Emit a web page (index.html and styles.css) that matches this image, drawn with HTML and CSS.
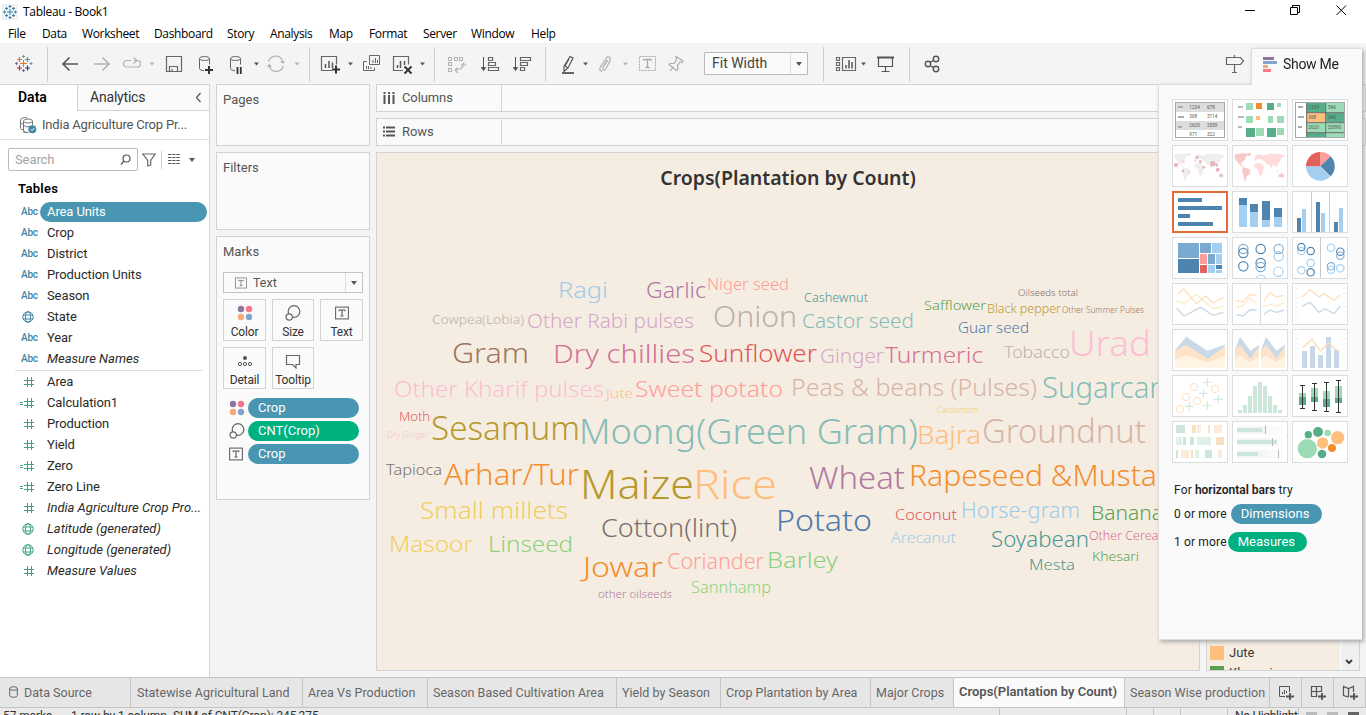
FILE: index.html
```html
<!DOCTYPE html>
<html lang="en">
<head>
<meta charset="utf-8">
<title>Tableau - Book1</title>
<link rel="stylesheet" href="styles.css">
</head>
<body>
<svg class="defs" width="0" height="0">
  <defs>
    <symbol id="globe" viewBox="0 0 12 12"><g fill="none" stroke="currentColor"><circle cx="6" cy="6" r="5.2"/><ellipse cx="6" cy="6" rx="2.5" ry="5.2"/><path d="M1 4h10M1 8h10"/></g></symbol>
    <symbol id="hash" viewBox="0 0 16 12"><path d="M5 4.500h10M5 8.500h10M8.500 1v10M12.500 1v10" fill="none" stroke="currentColor"/></symbol>
    <symbol id="calc" viewBox="0 0 16 12"><path d="M5 4.500h10M5 8.500h10M8.500 1v10M12.500 1v10M1 5.500h3M1 7.500h3" fill="none" stroke="currentColor"/></symbol>
    <symbol id="dots" viewBox="0 0 16 16"><circle cx="4" cy="4" r="3.200" fill="#8f769e"/><circle cx="12" cy="4" r="3.200" fill="#f8768b"/><circle cx="4" cy="12" r="3.200" fill="#f5a97c"/><circle cx="12" cy="12" r="3.200" fill="#83a5cc"/></symbol>
    <symbol id="size" viewBox="0 0 16 16"><g fill="#fafafa" stroke="#666" stroke-width="1.200"><circle cx="9" cy="6.500" r="5.800"/><circle cx="4.200" cy="12" r="3.200"/></g></symbol>
    <symbol id="textmark" viewBox="0 0 14 14"><rect x=".6" y="1.100" width="12.800" height="11.800" fill="none" stroke="#666" stroke-width="1.100"/><path d="M4.200 5.200V4h5.600v1.200M7 4v6M5.500 10h3" fill="none" stroke="#555" stroke-width="1.100"/></symbol>
  </defs>
</svg>

<header class="titlebar">
  <svg class="app-logo" width="16" height="16" viewBox="0 0 16 16"><rect width="16" height="16" fill="#eef2f5"/><path d="M8 5v6M5 8h6M8 1v3M6.500 2.500h3M8 12v3M6.500 13.500h3M2.500 6.500v3M1 8h3M13.500 6.500v3M12 8h3M4.500 3v3M3 4.500h3M11.500 3v3M10 4.500h3M4.500 10v3M3 11.500h3M11.500 10v3M10 11.500h3" stroke="#3d86aa" fill="none"/></svg>
  <span class="title">Tableau - Book1</span>
  <svg class="window-controls" width="130" height="22" viewBox="1236 0 130 22"><path d="M1245 10.500h10M1290.500 7.500h7v7h-7zM1292.500 7.500v-2h7v7h-2M1336.500 5.500l9.500 9.500M1346 5.500l-9.500 9.500" fill="none" stroke="#000"/></svg>
</header>
<nav class="menubar">
  <span class="m1">File</span><span class="m2">Data</span><span class="m3">Worksheet</span><span class="m4">Dashboard</span><span class="m5">Story</span><span class="m6">Analysis</span><span class="m7">Map</span><span class="m8">Format</span><span class="m9">Server</span><span class="m10">Window</span><span>Help</span>
</nav>

<div class="toolbar">
  <svg width="47" height="41" viewBox="0 43 47 41"><g fill="none" stroke-width="1.200"><path d="M23.500 60v7M20 63.500h7" stroke="#e8762c"/><path d="M19.500 57v5M17 59.500h5" stroke="#d9723b"/><path d="M27.500 57v5M25 59.500h5" stroke="#6b8ea8"/><path d="M19.500 65.500v5M17 68h5" stroke="#b5303c"/><path d="M27.500 65.500v5M25 68h5" stroke="#1f457e"/><path d="M23.500 55v3M22 56.500h3M31 62v3M29.500 63.500h3" stroke="#7199a6"/><path d="M16.500 62v3M15 63.500h3M23.500 69v3M22 70.500h3" stroke="#7b6e99"/></g></svg>
  <i class="sep"></i>
  <svg width="38" height="41" viewBox="48 43 38 41"><path d="M78 64H63M69.500 57.500L63 64l6.500 6.500" fill="none" stroke="#555" stroke-width="1.600"/></svg>
  <svg width="30" height="41" viewBox="86 43 30 41"><path d="M94 64h15M102.500 57.500L109 64l-6.500 6.500" fill="none" stroke="#b4b4b4" stroke-width="1.600"/></svg>
  <svg width="42" height="41" viewBox="116 43 42 41"><path d="M131 60.500h-4q-3.500 0-3.500 3.200t3.500 3.300h10q3.500 0 3.500-3.300t-3.500-3.200h-3M133.500 57.500l3.500 3-3.500 3" fill="none" stroke="#b4b4b4" stroke-width="1.200"/><path d="M149.500 62.500h5l-2.500 3z" fill="#b4b4b4"/></svg>
  <svg width="32" height="41" viewBox="158 43 32 41"><path d="M166.500 56.500h15v15h-15zM169.500 71.500v-5h8v5M172 69v2" fill="none" stroke="#666" stroke-width="1.200"/></svg>
  <svg width="32" height="41" viewBox="190 43 32 41"><g fill="none" stroke="#666"><ellipse cx="204.500" cy="58.500" rx="5" ry="2"/><path d="M199.500 58.500v10q0 2 4.500 2.200M209.500 58.500v6"/></g><path d="M205 70h8M209 66v8" stroke="#333" stroke-width="2"/></svg>
  <svg width="41" height="41" viewBox="222 43 41 41"><g fill="none" stroke="#666"><ellipse cx="235.500" cy="58.500" rx="5" ry="2"/><path d="M230.500 58.500v10q0 2 4.500 2.200M240.500 58.500v6"/></g><path d="M237.500 67v7M240.800 67v7" stroke="#333" stroke-width="1.800"/><path d="M254 62.500h5l-2.500 3z" fill="#555"/></svg>
  <svg width="46" height="41" viewBox="263 43 46 41"><path d="M268.500 61.500a7.500 7.500 0 0 1 14-1M283.500 66a7.500 7.500 0 0 1-14 1" fill="none" stroke="#b4b4b4" stroke-width="1.200"/><path d="M280 61h5l-2 3zM267 67h5l-3-3.500zM294.500 62.500h5l-2.500 3z" fill="#b4b4b4"/></svg>
  <i class="sep"></i>
  <svg width="48" height="41" viewBox="310 43 48 41"><path d="M332 70.500h-10.500v-14h15v8" fill="none" stroke="#666" stroke-width="1.200"/><path d="M325.500 64v4M329 61v7M332.500 62.500V68" stroke="#555" stroke-width="1.500"/><path d="M332 69.500h8M336 65.500v8" stroke="#333" stroke-width="2"/><path d="M348 62.500h5l-2.500 3z" fill="#555"/></svg>
  <svg width="30" height="41" viewBox="358 43 30 41"><path d="M369.500 55.500h10v9h-10zM367 61.500h-3.500v9h11v-3M373 60v3M375.500 58v5M377.500 60v3M366.500 66v3M368.500 66v3M371 67v2" fill="none" stroke="#666"/></svg>
  <svg width="46" height="41" viewBox="388 43 46 41"><path d="M403 70.500h-9.500v-14h15v8" fill="none" stroke="#666" stroke-width="1.200"/><path d="M397.500 65v3M400.500 61v7M404.500 61V65" stroke="#555" stroke-width="1.500"/><path d="M404.500 66.500l7 7M411.500 66.500l-7 7" stroke="#333" stroke-width="2"/><path d="M420 62.500h5l-2.500 3z" fill="#555"/></svg>
  <i class="sep"></i>
  <svg width="39" height="41" viewBox="435 43 39 41"><path d="M448.500 57.500h3v3h-3zM454.500 57.500h3v3h-3zM459.500 57.500h3v3h-3zM448.500 62.500h3v3h-3zM448.500 68.500h3v3h-3zM455 70q8 0 8.500-6M458 67.500l-3 2.500 3 3M461 66l2.500-3 2.500 3" fill="none" stroke="#b4b4b4" stroke-width="1.100"/></svg>
  <svg width="32" height="41" viewBox="474 43 32 41"><path d="M483.500 57v13M481.500 67.500h4l-2 3z" fill="#555" stroke="#555"/><path d="M488.500 57.500h4v3h-4zM488.500 62.500h7v3h-7zM488.500 67.500h10v3h-10z" fill="none" stroke="#666" stroke-width="1.200"/></svg>
  <svg width="39" height="41" viewBox="506 43 39 41"><path d="M515.500 57v13M513.500 67.500h4l-2 3z" fill="#555" stroke="#555"/><path d="M520.500 57.500h10v3h-10zM520.500 62.500h7v3h-7zM520.500 67.500h4v3h-4z" fill="none" stroke="#666" stroke-width="1.200"/></svg>
  <i class="sep"></i>
  <svg width="48" height="41" viewBox="546 43 48 41"><path d="M570 56.500l3 1.500-5 10-4 3.500v-5zM565 66l3 2M569 59l-4 7" fill="none" stroke="#555" stroke-width="1.200"/><path d="M562 73h12" stroke="#555" stroke-width="1.800"/><path d="M583 62.500h5l-2.500 3z" fill="#555"/></svg>
  <svg width="42" height="41" viewBox="594 43 42 41"><path d="M608 60l-4 7q-1 4 2 3l5-9q1-5-3-4l-6 9q-3 5 1 5M605 66l4-6" transform="translate(-1 0)" fill="none" stroke="#b4b4b4" stroke-width="1.300"/><path d="M623 62.500h5l-2.500 3z" fill="#b4b4b4"/></svg>
  <svg width="28" height="41" viewBox="636 43 28 41"><rect x="639.500" y="56.500" width="16" height="14" fill="none" stroke="#aaa" stroke-dasharray="2 1"/><path d="M644 61v-1.500h7V61M647.500 59.500V67M645.500 67.500h4" fill="none" stroke="#aaa" stroke-width="1.300"/></svg>
  <svg width="40" height="41" viewBox="664 43 40 41"><path d="M676 56.500l7 4.500-1 1.500-2-.5-2.500 3.500.5 4-1.500 1-7.500-6 1-1 4 0 2.500-3.500zM673.500 66.500l-3.500 4.500" fill="none" stroke="#aaa" stroke-width="1.200"/></svg>
  <div class="fit"><span>Fit Width</span><i class="caret"></i></div>
  <i class="sep"></i>
  <svg width="48" height="41" viewBox="824 43 48 41"><path d="M836.500 57.500h3v3h-3zM836.500 62.500h3v3h-3zM836.500 67.500h3v3h-3zM842.500 57.500h13v13h-13z" fill="none" stroke="#666" stroke-width="1.200"/><path d="M846 65v3.500M849 60v8.500M852 62v6.500" stroke="#555" stroke-width="1.500"/><path d="M861 62.500h5l-2.500 3z" fill="#555"/></svg>
  <svg width="37" height="41" viewBox="872 43 37 41"><path d="M878.500 57.500h14v9h-14zM885.500 67v4M881.500 71.500h8" fill="none" stroke="#555" stroke-width="1.200"/><path d="M877 57.500h17" stroke="#555" stroke-width="2"/></svg>
  <i class="sep"></i>
  <svg width="40" height="41" viewBox="910 43 40 41"><g fill="none" stroke="#555" stroke-width="1.400"><circle cx="928" cy="64" r="2.700"/><circle cx="936" cy="59" r="2.700"/><circle cx="936" cy="69" r="2.700"/><path d="M930 62.500l4-2.500M930 65.500l4 2.500"/></g></svg>
  <svg class="guide" width="32" height="41" viewBox="1219 43 32 41"><path d="M1226.500 57.500h14l3 3.500-3 3.500h-14zM1234.500 55v2.500M1234.500 64.500v8M1232 72.500h5" fill="none" stroke="#666" stroke-width="1.200"/></svg>
</div>

<main class="workspace">
  <aside class="data-pane">
    <div class="pane-tabs"><b>Data</b><span>Analytics<svg width="7" height="11" viewBox="0 0 7 11"><path d="M5.500 1L1.500 5.500l4 4.500" fill="none" stroke="#555" stroke-width="1.200"/></svg></span></div>
    <div class="source"><svg width="18" height="18" viewBox="0 0 18 18"><g fill="none" stroke="#777"><path d="M4 13.500H2.500Q1.500 13 1.500 12V4q0-2 4-2.500 2 0 3 .8M4 8q-1.500-.3-2.500-1M4 16q2 .6 4 .6"/><ellipse cx="9" cy="5" rx="4.500" ry="2"/><path d="M4.500 5v10q1 1.500 5 1.500M13.500 5v4M4.500 9.500q3 2 7 1"/></g><circle cx="13.300" cy="13.200" r="4" fill="#3f86a3"/><path d="M11.500 13.200l1.500 1.500 2.500-3" fill="none" stroke="#fff"/></svg><span>India Agriculture Crop Pr...</span></div>
    <div class="search-row">
      <div class="search"><span>Search</span><svg width="11" height="11" viewBox="0 0 11 11"><g fill="none" stroke="#555" stroke-width="1.200"><circle cx="6.500" cy="4.500" r="3.500"/><path d="M4 7L1 10.500"/></g></svg></div>
      <svg width="14" height="14" viewBox="0 0 14 14"><path d="M.8 1h12.400L8.700 7.500v4.500l-3 1v-5.500z" fill="none" stroke="#666" stroke-width="1.200"/></svg>
      <i class="vline"></i>
      <svg width="12" height="11" viewBox="0 0 12 11"><path d="M0 .5h12M0 3.500h12M0 6.500h12M0 9.500h12" stroke="#555" stroke-dasharray="3.500 .8 3.200 .8"/></svg>
      <i class="caret"></i>
    </div>
    <h2>Tables</h2>
    <ul class="fields blue">
      <li class="selected"><em>Abc</em><span>Area Units</span></li>
      <li><em>Abc</em><span>Crop</span></li>
      <li><em>Abc</em><span>District</span></li>
      <li><em>Abc</em><span>Production Units</span></li>
      <li><em>Abc</em><span>Season</span></li>
      <li><svg class="globe"><use href="#globe"/></svg><span>State</span></li>
      <li><em>Abc</em><span>Year</span></li>
      <li class="gen"><em>Abc</em><span>Measure Names</span></li>
    </ul>
    <ul class="fields green">
      <li><svg><use href="#hash"/></svg><span>Area</span></li>
      <li><svg><use href="#calc"/></svg><span>Calculation1</span></li>
      <li><svg><use href="#hash"/></svg><span>Production</span></li>
      <li><svg><use href="#hash"/></svg><span>Yield</span></li>
      <li><svg><use href="#calc"/></svg><span>Zero</span></li>
      <li><svg><use href="#calc"/></svg><span>Zero Line</span></li>
      <li class="gen"><svg><use href="#hash"/></svg><span>India Agriculture Crop Pro...</span></li>
      <li class="gen"><svg class="globe"><use href="#globe"/></svg><span>Latitude (generated)</span></li>
      <li class="gen"><svg class="globe"><use href="#globe"/></svg><span>Longitude (generated)</span></li>
      <li class="gen"><svg><use href="#hash"/></svg><span>Measure Values</span></li>
    </ul>
  </aside>

  <section class="cards">
    <div class="card pages">Pages</div>
    <div class="card filters">Filters</div>
    <div class="card marks">Marks
      <div class="mark-type"><svg width="12" height="12"><use href="#textmark"/></svg><span>Text</span><i class="caret"></i></div>
      <div class="mark-grid">
        <div><svg width="16" height="16"><use href="#dots"/></svg>Color</div>
        <div><svg width="16" height="16"><use href="#size"/></svg>Size</div>
        <div><svg width="14" height="16"><use href="#textmark"/></svg>Text</div>
        <div><svg width="16" height="16" viewBox="0 0 16 16"><circle cx="8" cy="5" r="2" fill="#555"/><g fill="none" stroke="#555"><circle cx="3" cy="11" r="1.600"/><circle cx="8" cy="11" r="1.600"/><circle cx="13" cy="11" r="1.600"/></g></svg>Detail</div>
        <div><svg width="16" height="16" viewBox="0 0 16 16"><path d="M1.500 2.500h13v9H11v3.500l-3.500-3.500h-6z" fill="none" stroke="#666" stroke-width="1.200"/></svg>Tooltip</div>
      </div>
      <div class="pills">
        <div><svg width="16" height="16"><use href="#dots"/></svg><span>Crop</span></div>
        <div><svg width="16" height="16"><use href="#size"/></svg><span class="measure">CNT(Crop)</span></div>
        <div><svg width="14" height="16"><use href="#textmark"/></svg><span>Crop</span></div>
      </div>
    </div>
  </section>

  <section class="sheet">
    <div class="shelf"><label><svg width="12" height="12" viewBox="0 0 12 12"><path d="M1.500 3v9M6 3v9M10.500 3v9M1.500 0v2M6 0v2M10.500 0v2" stroke="#555" stroke-width="2"/></svg>Columns</label></div>
    <div class="shelf"><label><svg width="12" height="12" viewBox="0 0 12 12"><path d="M3 1.500h9M3 5.500h9M3 9.500h9M0 1.500h2M0 5.500h2M0 9.500h2" stroke="#555" stroke-width="1.800"/></svg>Rows</label></div>
    <div class="view-row">
      <div class="view">
        <h1>Crops(Plantation by Count)</h1>
        <svg class="cloud" width="822" height="460" viewBox="377 210 822 460">
          <g fill="#a0cbe8"><text x="558" y="298" font-size="22" textLength="50" lengthAdjust="spacingAndGlyphs">Ragi</text><text x="961" y="518" font-size="21" textLength="119" lengthAdjust="spacingAndGlyphs">Horse-gram</text><text x="891" y="543" font-size="14" textLength="65" lengthAdjust="spacingAndGlyphs">Arecanut</text></g>
          <g fill="#b07aa1"><text x="646" y="298" font-size="21.500" textLength="60" lengthAdjust="spacingAndGlyphs">Garlic</text><text x="809" y="489" font-size="31" textLength="96" lengthAdjust="spacingAndGlyphs">Wheat</text><text x="598" y="598" font-size="11.500" textLength="74" lengthAdjust="spacingAndGlyphs">other oilseeds</text></g>
          <g fill="#ff9d9a"><text x="707" y="290" font-size="16" textLength="82" lengthAdjust="spacingAndGlyphs">Niger seed</text><text x="635" y="397" font-size="22.500" textLength="148" lengthAdjust="spacingAndGlyphs">Sweet potato</text><text x="667" y="569" font-size="21" textLength="97" lengthAdjust="spacingAndGlyphs">Coriander</text></g>
          <g fill="#499894"><text x="804" y="302" font-size="12.500" textLength="64" lengthAdjust="spacingAndGlyphs">Cashewnut</text><text x="991" y="547" font-size="21" textLength="98" lengthAdjust="spacingAndGlyphs">Soyabean</text><text x="1029" y="570" font-size="15" textLength="46" lengthAdjust="spacingAndGlyphs">Mesta</text></g>
          <g fill="#bab0ac"><text x="432" y="324" font-size="13.500" textLength="92" lengthAdjust="spacingAndGlyphs">Cowpea(Lobia)</text><text x="713" y="327" font-size="29" textLength="84" lengthAdjust="spacingAndGlyphs">Onion</text><text x="1004" y="358" font-size="17" textLength="66" lengthAdjust="spacingAndGlyphs">Tobacco</text></g>
          <g fill="#d4a6c8"><text x="527" y="328" font-size="20" textLength="167" lengthAdjust="spacingAndGlyphs">Other Rabi pulses</text><text x="820" y="363" font-size="20" textLength="64" lengthAdjust="spacingAndGlyphs">Ginger</text></g>
          <g fill="#86bcb6"><text x="802" y="328" font-size="20" textLength="112" lengthAdjust="spacingAndGlyphs">Castor seed</text><text x="1042" y="398" font-size="28.500" textLength="141" lengthAdjust="spacingAndGlyphs">Sugarcane</text><text x="579" y="444" font-size="35.500" textLength="339" lengthAdjust="spacingAndGlyphs">Moong(Green Gram)</text></g>
          <g fill="#59a14f"><text x="924" y="310" font-size="13" textLength="62" lengthAdjust="spacingAndGlyphs">Safflower</text><text x="1091" y="520" font-size="20" textLength="72" lengthAdjust="spacingAndGlyphs">Banana</text><text x="1092" y="561" font-size="13" textLength="47" lengthAdjust="spacingAndGlyphs">Khesari</text></g>
          <g fill="#b6992d"><text x="987" y="313" font-size="12.500" textLength="74" lengthAdjust="spacingAndGlyphs">Black pepper</text><text x="431" y="440" font-size="33" textLength="149" lengthAdjust="spacingAndGlyphs">Sesamum</text><text x="580" y="499" font-size="39.500" textLength="114" lengthAdjust="spacingAndGlyphs">Maize</text></g>
          <g fill="#9d7660"><text x="1062" y="313" font-size="8.500" textLength="82" lengthAdjust="spacingAndGlyphs">Other Summer Pulses</text><text x="452" y="363" font-size="28" textLength="77" lengthAdjust="spacingAndGlyphs">Gram</text></g>
          <g fill="#79706e"><text x="1018" y="296" font-size="9.500" textLength="60" lengthAdjust="spacingAndGlyphs">Oilseeds total</text><text x="386" y="475" font-size="15" textLength="56" lengthAdjust="spacingAndGlyphs">Tapioca</text><text x="601" y="537" font-size="25" textLength="136" lengthAdjust="spacingAndGlyphs">Cotton(lint)</text></g>
          <g fill="#4e79a7"><text x="958" y="333" font-size="15" textLength="71" lengthAdjust="spacingAndGlyphs">Guar seed</text><text x="776" y="530.500" font-size="29" textLength="96" lengthAdjust="spacingAndGlyphs">Potato</text></g>
          <g fill="#d37295"><text x="553" y="363" font-size="26" textLength="142" lengthAdjust="spacingAndGlyphs">Dry chillies</text><text x="885" y="362.500" font-size="22" textLength="98" lengthAdjust="spacingAndGlyphs">Turmeric</text><text x="1089" y="540" font-size="12" textLength="78" lengthAdjust="spacingAndGlyphs">Other Cereals</text></g>
          <g fill="#e15759"><text x="699" y="362" font-size="23.500" textLength="118" lengthAdjust="spacingAndGlyphs">Sunflower</text><text x="399" y="421" font-size="12" textLength="31" lengthAdjust="spacingAndGlyphs">Moth</text><text x="895" y="520" font-size="15" textLength="62" lengthAdjust="spacingAndGlyphs">Coconut</text></g>
          <g fill="#fabfd2"><text x="1069" y="356" font-size="35" textLength="82" lengthAdjust="spacingAndGlyphs">Urad</text><text x="394" y="397" font-size="22.500" textLength="210" lengthAdjust="spacingAndGlyphs">Other Kharif pulses</text><text x="387" y="438" font-size="8.500" textLength="41" lengthAdjust="spacingAndGlyphs">Dry Ginger</text></g>
          <g fill="#ffbe7d"><text x="606" y="398" font-size="13" textLength="27" lengthAdjust="spacingAndGlyphs">Jute</text><text x="917" y="444" font-size="25" textLength="64" lengthAdjust="spacingAndGlyphs">Bajra</text><text x="693" y="499" font-size="39.500" textLength="84" lengthAdjust="spacingAndGlyphs">Rice</text></g>
          <g fill="#d7b5a6"><text x="791" y="396" font-size="23.500" textLength="246" lengthAdjust="spacingAndGlyphs">Peas &amp; beans (Pulses)</text><text x="982" y="443" font-size="33" textLength="164" lengthAdjust="spacingAndGlyphs">Groundnut</text></g>
          <g fill="#f1ce63"><text x="937" y="413" font-size="8.500" textLength="41" lengthAdjust="spacingAndGlyphs">Cardamom</text><text x="420" y="519" font-size="24" textLength="148" lengthAdjust="spacingAndGlyphs">Small millets</text><text x="389" y="552" font-size="22.500" textLength="84" lengthAdjust="spacingAndGlyphs">Masoor</text></g>
          <g fill="#f28e2b"><text x="444" y="485" font-size="29.500" textLength="135" lengthAdjust="spacingAndGlyphs">Arhar/Tur</text><text x="909" y="486" font-size="29.500" textLength="248" lengthAdjust="spacingAndGlyphs">Rapeseed &amp;Musta</text><text x="583" y="577" font-size="28" textLength="80" lengthAdjust="spacingAndGlyphs">Jowar</text></g>
          <g fill="#8cd17d"><text x="488" y="552" font-size="22.500" textLength="85" lengthAdjust="spacingAndGlyphs">Linseed</text><text x="767" y="568" font-size="22" textLength="71" lengthAdjust="spacingAndGlyphs">Barley</text><text x="691" y="593" font-size="15.500" textLength="80" lengthAdjust="spacingAndGlyphs">Sannhamp</text></g>
        </svg>
      </div>
      <div class="legend">
        <ul><li><i class="jute"></i>Jute</li><li><i class="khesari"></i>Khesari</li></ul>
        <div class="scroll"><svg width="8" height="6" viewBox="0 0 8 6"><path d="M1 1l3 3 3-3" fill="none" stroke="#444" stroke-width="2"/></svg></div>
      </div>
    </div>
  </section>
</main>

<nav class="sheet-tabs">
  <span class="t1"><svg width="9" height="12" viewBox="0 0 9 12"><g fill="none" stroke="#666"><ellipse cx="4.500" cy="2.500" rx="3.800" ry="1.800"/><path d="M.7 2.500v7q0 1.800 3.800 1.800t3.800-1.800v-7"/></g></svg>Data Source</span><span class="t2">Statewise Agricultural Land</span><span class="t3">Area Vs Production</span><span class="t4">Season Based Cultivation Area</span><span class="t5">Yield by Season</span><span class="t6">Crop Plantation by Area</span><span class="t7">Major Crops</span><span class="t8 active">Crops(Plantation by Count)</span><span class="t9">Season Wise production</span>
  <span class="new"><svg width="16" height="16" viewBox="0 0 16 16"><path d="M7 11.500H1.500v-10h10V7M4.500 7v2M6.500 5v4M8.500 6v2" fill="none" stroke="#555"/><path d="M8 11.500h8M12 8v7" stroke="#555" stroke-width="1.800"/></svg></span>
  <span class="new"><svg width="16" height="16" viewBox="0 0 16 16"><path d="M7 11.500H1.500v-10h10V7M6.500 1.500v10M1.500 6.500h10" fill="none" stroke="#555" stroke-width="1.200"/><path d="M8 11.500h8M12 8v7" stroke="#555" stroke-width="1.800"/></svg></span>
  <span class="new"><svg width="16" height="16" viewBox="0 0 16 16"><path d="M6.500 12L1.500 10.500v-9l5 2 5-2V7M6.500 3.500V12" fill="none" stroke="#555" stroke-width="1.200"/><path d="M8 11.500h8M12 8v7" stroke="#555" stroke-width="1.800"/></svg></span>
</nav>
<footer class="status">
  <span class="s1">57 marks</span><span class="s2">1 row by 1 column</span><span class="s3">SUM of CNT(Crop): 345,375</span><i class="c1"></i><i class="c2"></i><i class="c3"></i><i class="c4"></i><span class="user">No Highlight</span>
  <svg width="66" height="8" viewBox="1300 708 66 8"><path d="M1307 712h11v4h-11z" fill="#bbb"/><path d="M1328 712h11v4h-11z" fill="#bbb"/><path d="M1349 712h11v4h-11z" fill="#666"/></svg>
</footer>

<aside class="show-me">
  <div class="show-tab"><svg width="14" height="16" viewBox="0 0 14 16"><path d="M0 0h11v3H0z" fill="#8f769e"/><path d="M0 4h14v3H0z" fill="#83a5cc"/><path d="M0 8h5v3H0z" fill="#f5a97c"/><path d="M0 12h8v3H0z" fill="#f8768b"/></svg>Show Me</div>
  <div class="show-body">
    <div class="thumbs">
      <svg viewBox="69 45 162 120"><path fill="#ddd" d="M77 53h147v28H77zM77 108h147v27H77z"/><rect x="76.500" y="52.500" width="147" height="105" fill="none" stroke="#aaa" stroke-width="3"/><path d="M84 66h15M84 96h18M84 126h12" stroke="#aaa" stroke-width="6"/><g class="num"><text x="118" y="73">1234</text><text x="171" y="73">678</text><text x="118" y="100">368</text><text x="171" y="100">3114</text><text x="118" y="127">2620</text><text x="171" y="127">2559</text><text x="118" y="152">971</text><text x="171" y="152">322</text></g></svg>
      <svg viewBox="249 45 162 120"><path d="M264 66h15M264 96h18M264 126h12" stroke="#bbb" stroke-width="6"/><path fill="#9cdbb5" d="M288 54h21v21h-21zM381 54h12v12h-12zM288 93h21v21h-21zM354 93h15v21h-15zM381 93h21v21h-21zM318 129h24v24h-24zM381 129h21v21h-21z"/><path fill="#56ad89" d="M351 54h21v21h-21zM288 129h27v27h-27zM351 129h27v27h-27z"/><path fill="#f28e2b" d="M318 54h18v18h-18z"/><path fill="#ffbe7d" d="M318 93h12v12h-12z"/></svg>
      <svg viewBox="429 45 162 120"><path fill="#56ad89" d="M470 54h56v28h-56zM528 84h56v28h-56zM470 144h56v12h-56z"/><path fill="#9cdbb5" d="M528 54h56v28h-56zM470 114h56v28h-56zM528 114h56v28h-56zM528 144h56v12h-56z"/><path fill="#ffbe7d" d="M470 84h56v28h-56z"/><path d="M470 53v104M527 53v104M470 83h114M470 113h114M470 143h114" stroke="#666" stroke-width="3"/><rect x="436.500" y="52.500" width="147" height="105" fill="none" stroke="#aaa" stroke-width="3"/><path d="M444 66h15M444 96h18M444 126h12" stroke="#aaa" stroke-width="6"/><g class="num"><text x="475" y="72">1234</text><text x="534" y="72">546</text><text x="475" y="103">368</text><text x="534" y="103">340</text><text x="475" y="133">2620</text><text x="534" y="133">53890</text></g></svg>

      <svg viewBox="69 183 162 120"><path fill="#eee" d="M73 211l8-5 22-1 12 2-4 7-4 1-1 8-8 7-5 4 2 8 6 2-3 3-8-6-8-11-7-9zM112 205l11-2-2 8-6 4zM99 247l10 1 13 8-3 10-9 9-4 14-4-4-2-15-4-10zM134 216l8-8 15 2 1 8-6 5-9-1-6 5-4-2zM135 236l14-3 9 7 6 8-5 6-1 12-7 8-5-8-3-13-8-4-3-8zM158 212l20-6 22 0 22 4-1 6-8 4-2 9-6 5-4 13-6-5-7-2-4 12-6-12-9-2-6-9-8-4zM207 268l9-4 7 6-1 8-9-1-8 0zM196 256l10 5-6 1z"/><g fill="#e4a6ae" opacity=".8"><circle cx="78" cy="240" r="6.500"/><circle cx="188" cy="236" r="8"/><circle cx="141" cy="217" r="4.500"/><circle cx="151" cy="230" r="5"/><circle cx="162" cy="247" r="4"/><circle cx="99" cy="258" r="4"/><circle cx="203" cy="254" r="6"/><circle cx="213" cy="272" r="4"/><circle cx="200" cy="240" r="4.500"/></g><g fill="#ffd1cf" opacity=".8"><circle cx="100" cy="230" r="5"/><circle cx="116" cy="262" r="5"/><circle cx="136" cy="228" r="4"/></g></svg>
      <svg viewBox="249 183 162 120"><path fill="#f5cac8" d="M253 211l8-5 22-1 12 2-4 7-4 1-1 8-8 7-5 4 2 8 6 2-3 3-8-6-8-11-7-9zM292 205l11-2-2 8-6 4zM279 247l10 1 13 8-3 10-9 9-4 14-4-4-2-15-4-10zM387 268l9-4 7 6-1 8-9-1-8 0z"/><path fill="#ffdcdb" d="M314 216l8-8 15 2 1 8-6 5-9-1-6 5-4-2zM315 236l14-3 9 7 6 8-5 6-1 12-7 8-5-8-3-13-8-4-3-8zM338 212l20-6 22 0 25 4-4 6-8 4-2 9-6 5-4 13-6-5-7-2-4 12-6-12-9-2-6-9-8-4zM376 256l10 5-6 1z"/></svg>
      <svg viewBox="429 183 162 120"><path d="M511 244V201a43 43 0 0 1 31 13z" fill="#ff9d9a"/><path d="M511 244l31-30a43 43 0 0 1 0 60z" fill="#4f84ae"/><path d="M511 244l31 30a43 43 0 0 1-74-30z" fill="#a5cff0"/><path d="M511 244h-43a43 43 0 0 1 43-43z" fill="#e1625a"/></svg>

      <svg class="picked" viewBox="72 324 156 114"><path fill="#4f84ae" d="M84 339h72v12H84zM84 363h132v12H84zM84 387h36v12H84zM84 411h105v12H84z"/></svg>
      <svg viewBox="249 321 162 120"><path fill="#a5cff0" d="M267 360h24v66h-24zM300 381h24v45h-24zM336 405h24v21h-24zM372 396h24v30h-24z"/><path fill="#4f84ae" d="M267 339h24v21h-24zM300 357h24v24h-24zM336 348h24v57h-24zM372 369h24v27h-24z"/></svg>
      <svg viewBox="429 321 162 120"><path d="M484.500 321v120M538.500 321v120" stroke="#ccc" stroke-width="3"/><path fill="#4f84ae" d="M441 399h12v42h-12zM498 351h12v90h-12zM552 411h12v30h-12z"/><path fill="#a5cff0" d="M456 372h12v69h-12zM513 384h12v57h-12zM567 369h12v72h-12z"/></svg>

      <svg viewBox="69 459 162 120"><path fill="#7baad0" d="M84 474h63v45H84zM150 474h33v30h-33zM174 507h21v30h-21z"/><path fill="#a5cff0" d="M186 474h30v30h-30zM198 507h18v30h-18zM174 540h21v24h-21zM198 555h18v9h-18z"/><path fill="#4f84ae" d="M84 522h63v42H84zM198 540h18v12h-18z"/><path fill="#ff9d9a" d="M150 507h21v30h-21z"/><path fill="#e1625a" d="M150 540h21v24h-21z"/></svg>
      <svg viewBox="249 459 162 120" fill="none" stroke="#4f84ae" stroke-width="3.500"><circle cx="280" cy="492" r="14" stroke="#84afd3"/><circle cx="280" cy="504" r="14"/><circle cx="280" cy="544" r="14"/><circle cx="332" cy="492" r="14"/><circle cx="332" cy="534" r="14"/><g stroke="#a5cff0"><circle cx="386" cy="514" r="14"/><circle cx="385" cy="560" r="14"/><circle cx="332" cy="584" r="14"/></g><circle cx="332" cy="546" r="14" stroke="#84afd3"/><circle cx="386" cy="492" r="14" stroke="#84afd3"/></svg>
      <svg viewBox="429 459 162 120" fill="none" stroke="#4f84ae" stroke-width="3.500"><path d="M511.500 459v120" stroke="#ccc" stroke-width="3"/><g stroke="#a5cff0"><circle cx="454" cy="498" r="11"/><circle cx="482" cy="534" r="11"/><circle cx="454" cy="556" r="11"/><circle cx="543" cy="488" r="11"/><circle cx="543" cy="554" r="11"/><circle cx="571" cy="550" r="11"/></g><circle cx="454" cy="486" r="11"/><circle cx="482" cy="498" r="11"/><circle cx="482" cy="562" r="11"/><circle cx="571" cy="500" r="11"/><circle cx="571" cy="512" r="11" stroke="#84afd3"/><circle cx="543" cy="544" r="11" stroke="#84afd3"/></svg>

      <svg class="line" viewBox="69 12 162 120"><path stroke="#fdecc8" d="M80 63l22 8 36-28 51 43 31-7"/><path stroke="#fee0c0" d="M82 43l20-16 36 44 30-23 21 21 31-16"/><path stroke="#c8d8e8" d="M80 85l22 23 50-26 37 24 31-9"/></svg>
      <svg class="line" viewBox="249 12 162 120"><path stroke="#ddd" d="M331.500 12v120"/><path stroke="#fdecc8" d="M258 81l20-3 22-24 19 15M340 80l22-7 20 6 20-12"/><path stroke="#fee0c0" d="M258 61l21 5 20-22 21 2M342 62l18-24 20 13 22-5"/><path stroke="#c8d8e8" d="M258 103l21 5 20-18 21 0M342 103l18-13 20 7 22-7"/></svg>
      <svg class="line" viewBox="429 12 162 120"><path d="M439.500 24v90M583.500 24v90" stroke="#eee" stroke-width="9" stroke-dasharray="3 11"/><path stroke="#fee0c0" d="M455 52l26-23 26 22 17-10 28 20 18-16"/><path stroke="#c8d8e8" d="M455 79l25-12 27 30 18-11 27 15 19-23"/></svg>

      <svg viewBox="69 150 162 120"><path fill="#cad9e8" d="M75 210l34-40 63 42 53-18v70H75z"/><path fill="#fde4c9" d="M75 212l34-18 63 42 53-37v65H75z"/><path fill="#fff3e3" d="M75 240l34-14 63 21 53-18v35H75z"/></svg>
      <svg viewBox="249 150 162 120"><g id="areas"><path fill="#cad9e8" d="M255 210l15-40 31 42 26-18v70h-72z"/><path fill="#fde4c9" d="M255 212l15-18 31 42 26-37v65h-72z"/><path fill="#fff3e3" d="M255 240l15-14 31 21 26-18v35h-72z"/></g><use href="#areas" x="78"/></svg>
      <svg viewBox="429 150 162 120"><path d="M439.500 162v90M583.500 162v90" stroke="#eee" stroke-width="9" stroke-dasharray="3 11"/><path fill="#c8d8e8" d="M456 213h15v51h-15zM480 198h15v66h-15zM504 225h15v39h-15zM528 171h15v93h-15zM552 210h15v54h-15z"/><path stroke="#fddcb9" fill="none" stroke-width="4" d="M459 203l27-25 25 35 25-24 28 25"/></svg>

      <svg class="line thin" viewBox="69 288 162 120"><g stroke="#fee0bd"><circle cx="132" cy="321" r="11"/><circle cx="195" cy="327" r="11"/><circle cx="108" cy="351" r="11"/><circle cx="141" cy="363" r="11"/><circle cx="90" cy="387" r="11"/></g><path stroke="#c9e7da" d="M159 307h26M172 294v26M147 340h26M160 327v26M192 358h26M205 345v26M105 379h26M118 366v26M159 376h26M172 363v26"/></svg>
      <svg viewBox="249 288 162 120"><path fill="#cce6da" d="M264 390h12v9h-12zM279 375h12v24h-12zM294 348h12v51h-12zM309 318h12v81h-12zM324 306h12v93h-12zM339 318h12v81h-12zM354 348h12v51h-12zM369 375h12v24h-12zM384 390h12v9h-12z"/></svg>
      <svg viewBox="429 288 162 120"><path fill="#9cdbb5" d="M447 339h21v12h-21zM483 324h21v27h-21zM519 333h21v24h-21zM555 318h21v36h-21z"/><path fill="#56ad89" d="M447 351h21v24h-21zM483 351h21v15h-21zM519 357h21v24h-21zM555 354h21v15h-21z"/><path d="M450 316.500h15M457.500 316v69M450 385.500h15M486 310.500h15M493.500 310v81M486 391.500h15M522 307.500h15M529.500 307v87M522 394.500h15M558 301.500h15M565.500 301v96M558 397.500h15" stroke="#333" stroke-width="3"/></svg>

      <svg viewBox="69 426 162 120"><path fill="#cce6da" d="M78 435h27v24H78zM99 471h9v24h-9zM120 471h12v24h-12zM78 510h6v24h-6zM165 510h21v24h-21z"/><path fill="#fbdfc3" d="M126 435h12v24h-12zM174 435h6v24h-6zM198 471h24v24h-24zM123 510h6v24h-6z"/><path fill="#fdebd8" d="M141 435h12v24h-12zM192 435h24v24h-24zM93 510h24v24H93zM204 510h12v24h-12z"/><path fill="#e0f2e8" d="M78 471h18v24H78zM141 471h42v24h-42zM135 510h12v24h-12z"/></svg>
      <svg viewBox="249 426 162 120"><path fill="#f5f5f5" d="M261 438h120v24H261zM261 474h105v24H261zM261 510h90v24h-90z"/><path fill="#fafafa" d="M351 438h48v24h-48zM366 474h33v24h-33zM351 510h48v24h-48z"/><path fill="#cce6da" d="M261 444h75v12h-75zM261 480h120v12H261zM261 516h63v12h-63z"/><path d="M346.500 438v24M367.500 474v24M385.500 510v24" stroke="#bbb" stroke-width="3"/></svg>
      <svg viewBox="429 426 162 120"><g fill="#56ad89"><circle cx="475" cy="464" r="11"/><circle cx="504" cy="456" r="15"/><circle cx="516" cy="522" r="13"/></g><g fill="#9cdbb5"><circle cx="472" cy="506" r="29"/><circle cx="533" cy="459" r="10"/></g><g fill="#ffbe7d"><circle cx="563" cy="473" r="20"/><circle cx="518" cy="489" r="17"/></g><circle cx="546" cy="504" r="12" fill="#f28e2b"/></svg>
    </div>
    <p class="hint">For <b>horizontal bars</b> try</p>
    <p>0 or more <span class="pill">Dimensions</span></p>
    <p class="second">1 or more <span class="pill measure">Measures</span></p>
  </div>
</aside>
</body>
</html>
```

FILE: styles.css
```css
* { box-sizing: border-box; }
body { margin: 0; width: 1366px; height: 715px; overflow: hidden; position: relative; display: flex; flex-direction: column; background: #f4f4f4; color: #3a3a3a; font: 13px/16px Roboto, "Liberation Sans", sans-serif; letter-spacing: 0; }
svg { display: block; flex: none; }
ul, h1, h2, p { margin: 0; padding: 0; list-style: none; }
i { display: block; flex: none; font-style: normal; }
.defs { position: absolute; }
.caret { width: 0; height: 0; border: 3.5px solid transparent; border-top: 4px solid #555; border-bottom: 0; }

.titlebar { height: 24px; flex: none; display: flex; background: #fff; color: #000; font: 12px/24px "Open Sans", sans-serif; letter-spacing: -.3px; }
.app-logo { margin: 4px 5px 0 2px; }
.title { flex: 1; }
.menubar { height: 19px; flex: none; display: flex; padding-left: 8px; background: #fff; color: #000; font: 12px/19px "Open Sans", sans-serif; letter-spacing: -.35px; }
.menubar span { flex: none; }
.m1 { width: 34px; } .m2 { width: 40px; } .m3 { width: 72px; } .m4 { width: 73px; } .m5 { width: 43px; } .m6 { width: 59px; } .m7 { width: 40px; } .m8 { width: 54px; } .m9 { width: 48px; } .m10 { width: 60px; }

.toolbar { height: 41px; flex: none; display: flex; padding-right: 115px; background: #f4f4f4; }
.sep { width: 1px; height: 35px; margin-top: 4px; background: #d0d0d0; }
.guide { margin-left: auto; }
.fit { width: 104px; height: 23px; margin: 9px 15px 0 0; border: 1px solid #bbb; border-radius: 1px; background: #fafafa; display: flex; align-items: center; font-size: 14px; color: #444; }
.fit span { flex: 1; padding-left: 7px; line-height: 21px; border-right: 1px solid #ddd; }
.fit .caret { margin: 0 5px; }

.workspace { height: 593px; flex: none; display: flex; gap: 6px; }
.data-pane { width: 210px; flex: none; background: #fff; border-right: 1px solid #d3d3d3; border-top: 1px solid #d3d3d3; }
.pane-tabs { height: 26px; display: flex; font-size: 14px; line-height: 25px; color: #333; letter-spacing: -.2px; }
.pane-tabs b { width: 77px; padding-left: 18px; color: #000; letter-spacing: 0; font-weight: 600; }
.pane-tabs span { flex: 1; display: flex; justify-content: space-between; padding: 0 7px 0 12px; border-left: 1px solid #d3d3d3; border-bottom: 1px solid #d3d3d3; background: #fafafa; }
.pane-tabs svg { margin-top: 7px; }
.source { height: 29px; display: flex; align-items: center; gap: 5px; padding-left: 19px; border-bottom: 1px solid #e3e3e3; color: #555; letter-spacing: -.2px; }
.search-row { height: 39px; display: flex; align-items: center; padding: 0 0 0 8px; }
.search { width: 130px; height: 23px; margin-right: 4px; border: 1px solid #bbb; border-radius: 2px; display: flex; align-items: center; justify-content: space-between; padding: 0 6px; color: #a5a5a5; letter-spacing: -.1px; }
.vline { width: 1px; height: 18px; background: #d0d0d0; margin: 0 6px 0 5px; }
.search-row > .caret { margin-left: 9px; }
h2 { padding: 1px 0 0 18px; font: 600 13px/18px Roboto, sans-serif; letter-spacing: .3px; color: #000; height: 22px; }
.fields li { height: 21px; display: flex; align-items: center; color: #2a2a2a; letter-spacing: -.1px; }
.fields em { width: 19px; margin-left: 21px; font: 500 10px/20px Roboto, sans-serif; letter-spacing: -.2px; padding-top: 1px; }
.fields svg { width: 16px; height: 12px; margin: 0 5px 0 19px; }
.fields svg.globe { width: 12px; margin: 0 6px 0 22px; }
.fields span { padding-left: 7px; height: 20px; line-height: 20px; }
.blue em, .blue svg { color: #3f86a3; }
.green em, .green svg { color: #3fa67c; }
.fields .selected span { width: 167px; border-radius: 10px; background: #4996b2; color: #fff; }
.fields .gen { font-style: italic; letter-spacing: 0; }
.blue { margin-bottom: 1px; }
.green { margin: 0 6px 0 15px; border-top: 1px solid #ddd; }
.green li { margin-left: -15px; white-space: nowrap; }

.cards { width: 154px; flex: none; display: flex; flex-direction: column; gap: 6px; }
.card { border: 1px solid #d3d3d3; background: #fafafa; padding: 7px 6px; color: #555; }
.pages { height: 62px; } .filters { height: 78px; } .marks { height: 264px; }
.mark-type { height: 21px; margin-top: 12px; border: 1px solid #c4c4c4; display: flex; align-items: center; padding: 0 5px 0 11px; font-size: 12.5px; }
.mark-type span { flex: 1; align-self: stretch; line-height: 19px; padding-left: 6px; border-right: 1px solid #ddd; margin-right: 5px; }
.mark-type svg { opacity: .7; }
.mark-grid { display: grid; grid-template-columns: 43px 42px 43px; grid-auto-rows: 42px; gap: 6px; margin-top: 6px; font-size: 12px; color: #333; }
.mark-grid div { border: 1px solid #d3d3d3; display: flex; flex-direction: column; align-items: center; padding-top: 5px; gap: 3px; white-space: nowrap; letter-spacing: -.15px; }
.pills { margin-top: 9px; display: flex; flex-direction: column; gap: 3px; }
.pills div { height: 20px; display: flex; align-items: center; padding-left: 6px; }
.pills span { width: 111px; margin-left: auto; margin-right: 4px; height: 20px; line-height: 20px; border-radius: 10px; background: #4996b2; color: #fff; padding-left: 10px; }
.pills .measure, .pill.measure { background: #00b180; }

.sheet { width: 990px; flex: none; }
.shelf { height: 28px; margin-bottom: 6px; border: 1px solid #d3d3d3; background: #fafafa; }
.shelf label { display: flex; width: 125px; height: 26px; align-items: center; gap: 7px; padding-left: 6px; border-right: 1px solid #d3d3d3; color: #555; letter-spacing: -.1px; }
.view-row { display: flex; gap: 6px; }
.view { width: 824px; height: 519px; border: 1px solid #d3d3d3; background: #f6ede2; }
h1 { height: 57px; padding-top: 12px; text-align: center; font: 600 19.5px/26px "Noto Sans", sans-serif; letter-spacing: 0; color: #333; }
.cloud text { font-family: "Noto Sans", "Open Sans", sans-serif; font-weight: 300; letter-spacing: 0; }
.legend { width: 154px; height: 519px; border: 1px solid #d3d3d3; background: #f6ede2; display: flex; justify-content: space-between; overflow: hidden; }
.legend ul { margin: 490px 0 0 3px; }
.legend li { height: 20px; display: flex; align-items: center; gap: 5px; }
.legend li i { width: 14px; height: 14px; }
.jute { background: #ffbe7d; } .khesari { background: #59a14f; }
.scroll { width: 19px; background: #f0f0f0; border-left: 1px solid #fff; padding: 506px 0 0 4px; }

.sheet-tabs { height: 31px; flex: none; display: flex; border-top: 1px solid #c4c4c4; border-bottom: 1px solid #c4c4c4; background: #e6e6e6; color: #666; font-size: 12.5px; line-height: 30px; letter-spacing: .02px; white-space: nowrap; }
.sheet-tabs span { flex: none; border-right: 1px solid #c4c4c4; padding-left: 6px; overflow: hidden; }
.sheet-tabs .t1 { width: 131px; display: flex; padding-left: 9px; gap: 6px; } .t1 svg { margin-top: 8px; }
.sheet-tabs .t3, .sheet-tabs .t4, .sheet-tabs .t5, .sheet-tabs .t6, .sheet-tabs .t7, .sheet-tabs .t9 { padding-left: 5px; }
.t2 { width: 172px; } .t3 { width: 125px; } .t4 { width: 189px; } .t5 { width: 104px; } .t6 { width: 150px; } .t7 { width: 83px; } .t8 { width: 171px; } .t9 { width: 145px; }
.sheet-tabs .active { background: #fafafa; font-size: 13px; font-weight: 600; color: #555; line-height: 28px; letter-spacing: 0; padding-left: 5px; }
.sheet-tabs .new { width: 32px; padding: 7px 0 0 8px; }
.status { height: 7px; flex: none; display: flex; overflow: hidden; background: #eaeaea; font-size: 12px; line-height: 17px; letter-spacing: -.1px; color: #333; }
.status i { border-left: 1px solid #c4c4c4; }
.s1 { width: 71px; padding-left: 3px; } .s2 { width: 102px; } .s3 { width: 826px; }
.c1 { width: 127px; } .c2, .c3 { width: 27px; } .c4 { width: 47px; }
.user { width: 72px; padding-left: 7px; border-left: 1px solid #c4c4c4; border-right: 1px solid #c4c4c4; letter-spacing: -.3px; white-space: nowrap; }

.show-me { position: absolute; left: 1158px; top: 48px; width: 204px; height: 592px; display: flex; flex-direction: column; align-items: flex-end; filter: drop-shadow(2px 2px 2px #aaa); }
.show-tab { width: 111px; height: 37px; margin-bottom: -1px; z-index: 1; padding: 0 0 7px 11px; display: flex; align-items: center; gap: 6px; background: #fafafa; border: 1px solid #ddd; border-width: 1px 0 0 1px; font-size: 14px; letter-spacing: -.3px; color: #222; }
.show-tab svg { margin-top: 2px; }
.show-body { width: 204px; flex: 1; background: #fafafa; border: 1px solid #ddd; border-right: 0; padding: 14px 13px; }
.thumbs { display: grid; grid-template-columns: repeat(3, 56px); grid-auto-rows: 42px; gap: 4px; margin-bottom: 18px; }
.thumbs svg { width: 56px; height: 42px; border: 1px solid #ddd; background: #fff; }
.thumbs .picked { border: 2px solid #e06c37; }
.thumbs .line { fill: none; stroke-width: 4; } .thumbs .thin { stroke-width: 3; }
.num { font: 14px Roboto, sans-serif; fill: #555; }
.show-body p { display: flex; gap: 4px; padding-left: 2px; height: 20px; line-height: 21px; font-size: 12px; margin-bottom: 8px; color: #222; letter-spacing: .15px; }
.show-body .second { gap: 1px; }
.show-body .hint { height: 17px; line-height: 18px; margin-bottom: 6px; gap: 3px; }
.show-body b { font-weight: 600; letter-spacing: 0; }
.pill { height: 20px; line-height: 20px; border-radius: 10px; background: #4996b2; color: #fff; padding: 0 12px 0 10px; font-size: 13px; letter-spacing: .05px; }
```
